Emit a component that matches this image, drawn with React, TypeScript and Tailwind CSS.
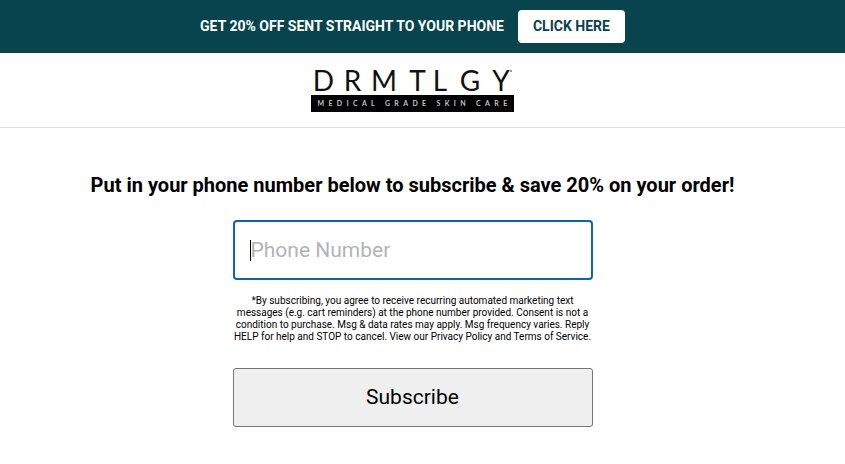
const letters: { c: string; w: number; gap: number }[] = [
  { c: "D", w: 15, gap: 0 },
  { c: "R", w: 13, gap: 15 },
  { c: "M", w: 18, gap: 16 },
  { c: "T", w: 15, gap: 17 },
  { c: "L", w: 10, gap: 10 },
  { c: "G", w: 20, gap: 15 },
  { c: "Y", w: 18, gap: 12 },
];

export default function App() {
  return (
    <div className="w-[845px] h-[464px] overflow-hidden bg-white font-['Roboto',sans-serif] text-black">
      <div className="h-[53px] bg-[#07444d] flex items-center justify-center gap-[14px] pr-[20px]">
        <span className="text-[14px] font-bold text-white">GET 20% OFF SENT STRAIGHT TO YOUR PHONE</span>
        <button className="w-[107px] h-[33px] bg-white rounded-[4px] text-[14px] font-bold text-[#07444d]">CLICK HERE</button>
      </div>
      <div className="h-[75px] border-b border-[#e0e0e0] flex flex-col items-center pt-[15px] pr-[20px]">
        <div className="flex ml-[3px] h-[24px] items-center font-['Lato',sans-serif] text-[28px] leading-[24px] font-normal text-[#111]">
          {letters.map(({ c, w, gap }) => (
            <span key={c} className="flex justify-center" style={{ width: w, marginLeft: gap }}>{c}</span>
          ))}
          <span className="w-[2px] h-[2px] mb-[18px] bg-[#777] rounded-full" />
        </div>
        <div className="mt-[3px] w-[203px] h-[17px] pl-[4px] bg-black text-[#c4c4c4] text-[7px] leading-[17px] font-bold tracking-[4.35px] text-center font-['Lato',sans-serif] whitespace-nowrap">
          MEDICAL GRADE SKIN CARE
        </div>
      </div>
      <div className="w-[825px]">
        <h1 className="mt-[44px] text-center text-[20px] leading-[26px] font-bold">
          Put in your phone number below to subscribe &amp; save 20% on your order!
        </h1>
        <div className="mt-[22px] mx-auto w-[360px] h-[60px] border-2 border-[#0a5fc9] rounded-[4px] flex items-center pl-[15px]">
          <span className="w-[1px] h-[21px] bg-black" />
          <span className="text-[21px] leading-[24px] text-[#b3b3b3]">Phone Number</span>
        </div>
        <p className="mt-[15px] mx-auto w-[360px] text-center text-[10px] leading-[12px] whitespace-nowrap">
          *By subscribing, you agree to receive recurring automated marketing text<br />
          messages (e.g. cart reminders) at the phone number provided. Consent is not a<br />
          condition to purchase. Msg &amp; data rates may apply. Msg frequency varies. Reply<br />
          HELP for help and STOP to cancel. View our Privacy Policy and Terms of Service.
        </p>
        <button className="block mt-[25px] mx-auto w-[360px] h-[59px] bg-[#efefef] border border-[#767676] rounded-[3px] text-[21px]">
          Subscribe
        </button>
      </div>
    </div>
  );
}
